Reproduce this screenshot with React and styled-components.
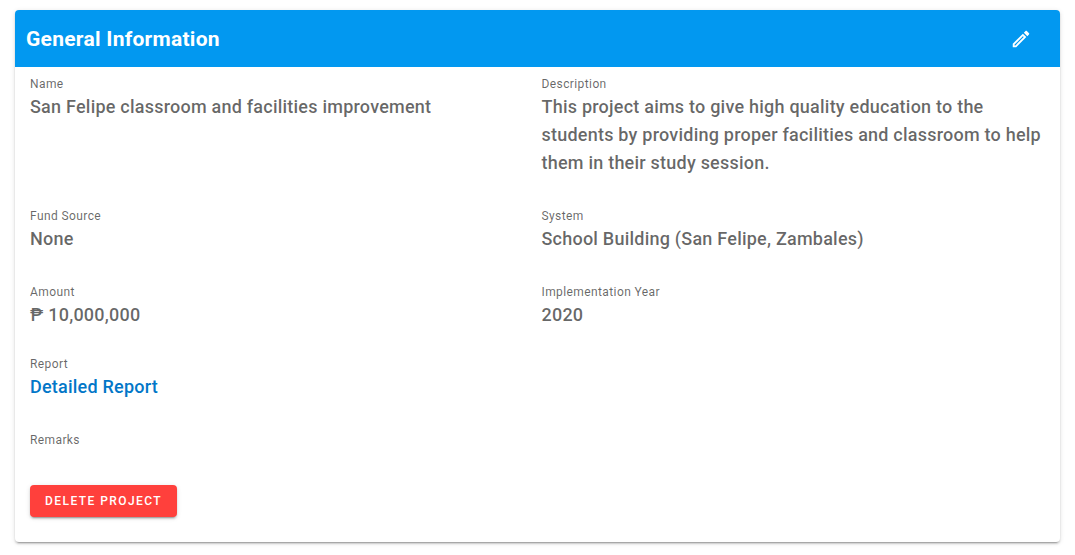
import React from "react";
import styled, { createGlobalStyle } from "styled-components";
import { MdOutlineEdit } from "react-icons/md";

const GlobalStyle = createGlobalStyle`
  * { box-sizing: border-box; }
  body {
    margin: 0;
    background: #fff;
    font-family: Roboto, "Liberation Sans", sans-serif;
    color: rgba(0, 0, 0, 0.6);
  }
`;

const Page = styled.main`
  padding: 10px 15px 12px;
`;

const Card = styled.section`
  background: #fff;
  border-radius: 4px;
  box-shadow: 0 3px 1px -2px rgba(0, 0, 0, 0.2), 0 2px 2px 0 rgba(0, 0, 0, 0.14),
    0 1px 5px 0 rgba(0, 0, 0, 0.12);
`;

const Header = styled.header`
  display: flex;
  align-items: center;
  justify-content: space-between;
  min-height: 57px;
  padding: 0 21px 0 11px;
  border-radius: 4px 4px 0 0;
  background: #0298f0;
  color: #fff;
`;

const Title = styled.h1`
  margin: 0;
  font-size: 21px;
  line-height: 32px;
  font-weight: 700;
  letter-spacing: 0.0125em;
`;

const IconButton = styled.button`
  display: flex;
  align-items: center;
  justify-content: center;
  width: 36px;
  height: 36px;
  padding: 0;
  border: 0;
  border-radius: 50%;
  background: transparent;
  color: inherit;
  cursor: pointer;
`;

const Details = styled.dl`
  display: grid;
  grid-template-columns: 1fr 1fr;
  margin: 0;
  padding: 8px 11px 0;
`;

const Field = styled.div`
  grid-column: ${({ $wide }) => ($wide ? "1 / -1" : "auto")};
  padding: 0 4px ${({ $gap }) => $gap}px;
`;

const Label = styled.dt`
  font-size: 12px;
  line-height: 18px;
  letter-spacing: 0.0333333em;
`;

const Value = styled.dd`
  margin: 0;
  font-size: 18px;
  line-height: 28px;
  font-weight: 500;
  letter-spacing: 0.0125em;
`;

const ReportLink = styled.a`
  color: #0277c8;
  text-decoration: none;
`;

const Actions = styled.div`
  padding: 0 15px 25px;
`;

const DeleteButton = styled.button`
  height: 32px;
  padding: 0 15px;
  border: 0;
  border-radius: 4px;
  background: #ff403c;
  color: #fff;
  font-family: inherit;
  font-size: 12px;
  font-weight: 500;
  letter-spacing: 0.12em;
  text-transform: uppercase;
  cursor: pointer;
  box-shadow: 0 3px 1px -2px rgba(0, 0, 0, 0.2), 0 2px 2px 0 rgba(0, 0, 0, 0.14),
    0 1px 5px 0 rgba(0, 0, 0, 0.12);
`;

const fields = [
  { label: "Name", value: "San Felipe classroom and facilities improvement", gap: 30 },
  {
    label: "Description",
    value:
      "This project aims to give high quality education to the students by providing proper facilities and classroom to help them in their study session.",
    gap: 30,
  },
  { label: "Fund Source", value: "None", gap: 30 },
  { label: "System", value: "School Building (San Felipe, Zambales)", gap: 30 },
  { label: "Amount", value: "₱ 10,000,000", gap: 26 },
  { label: "Implementation Year", value: "2020", gap: 26 },
  { label: "Report", value: <ReportLink href="#report">Detailed Report</ReportLink>, gap: 30, wide: true },
  { label: "Remarks", value: "", gap: 36, wide: true },
];

export default function App() {
  return (
    <>
      <GlobalStyle />
      <Page>
        <Card>
          <Header>
            <Title>General Information</Title>
            <IconButton type="button" aria-label="Edit general information">
              <MdOutlineEdit size={22} />
            </IconButton>
          </Header>
          <Details>
            {fields.map(({ label, value, gap, wide }) => (
              <Field key={label} $gap={gap} $wide={wide}>
                <Label>{label}</Label>
                <Value>{value}</Value>
              </Field>
            ))}
          </Details>
          <Actions>
            <DeleteButton type="button">Delete Project</DeleteButton>
          </Actions>
        </Card>
      </Page>
    </>
  );
}
